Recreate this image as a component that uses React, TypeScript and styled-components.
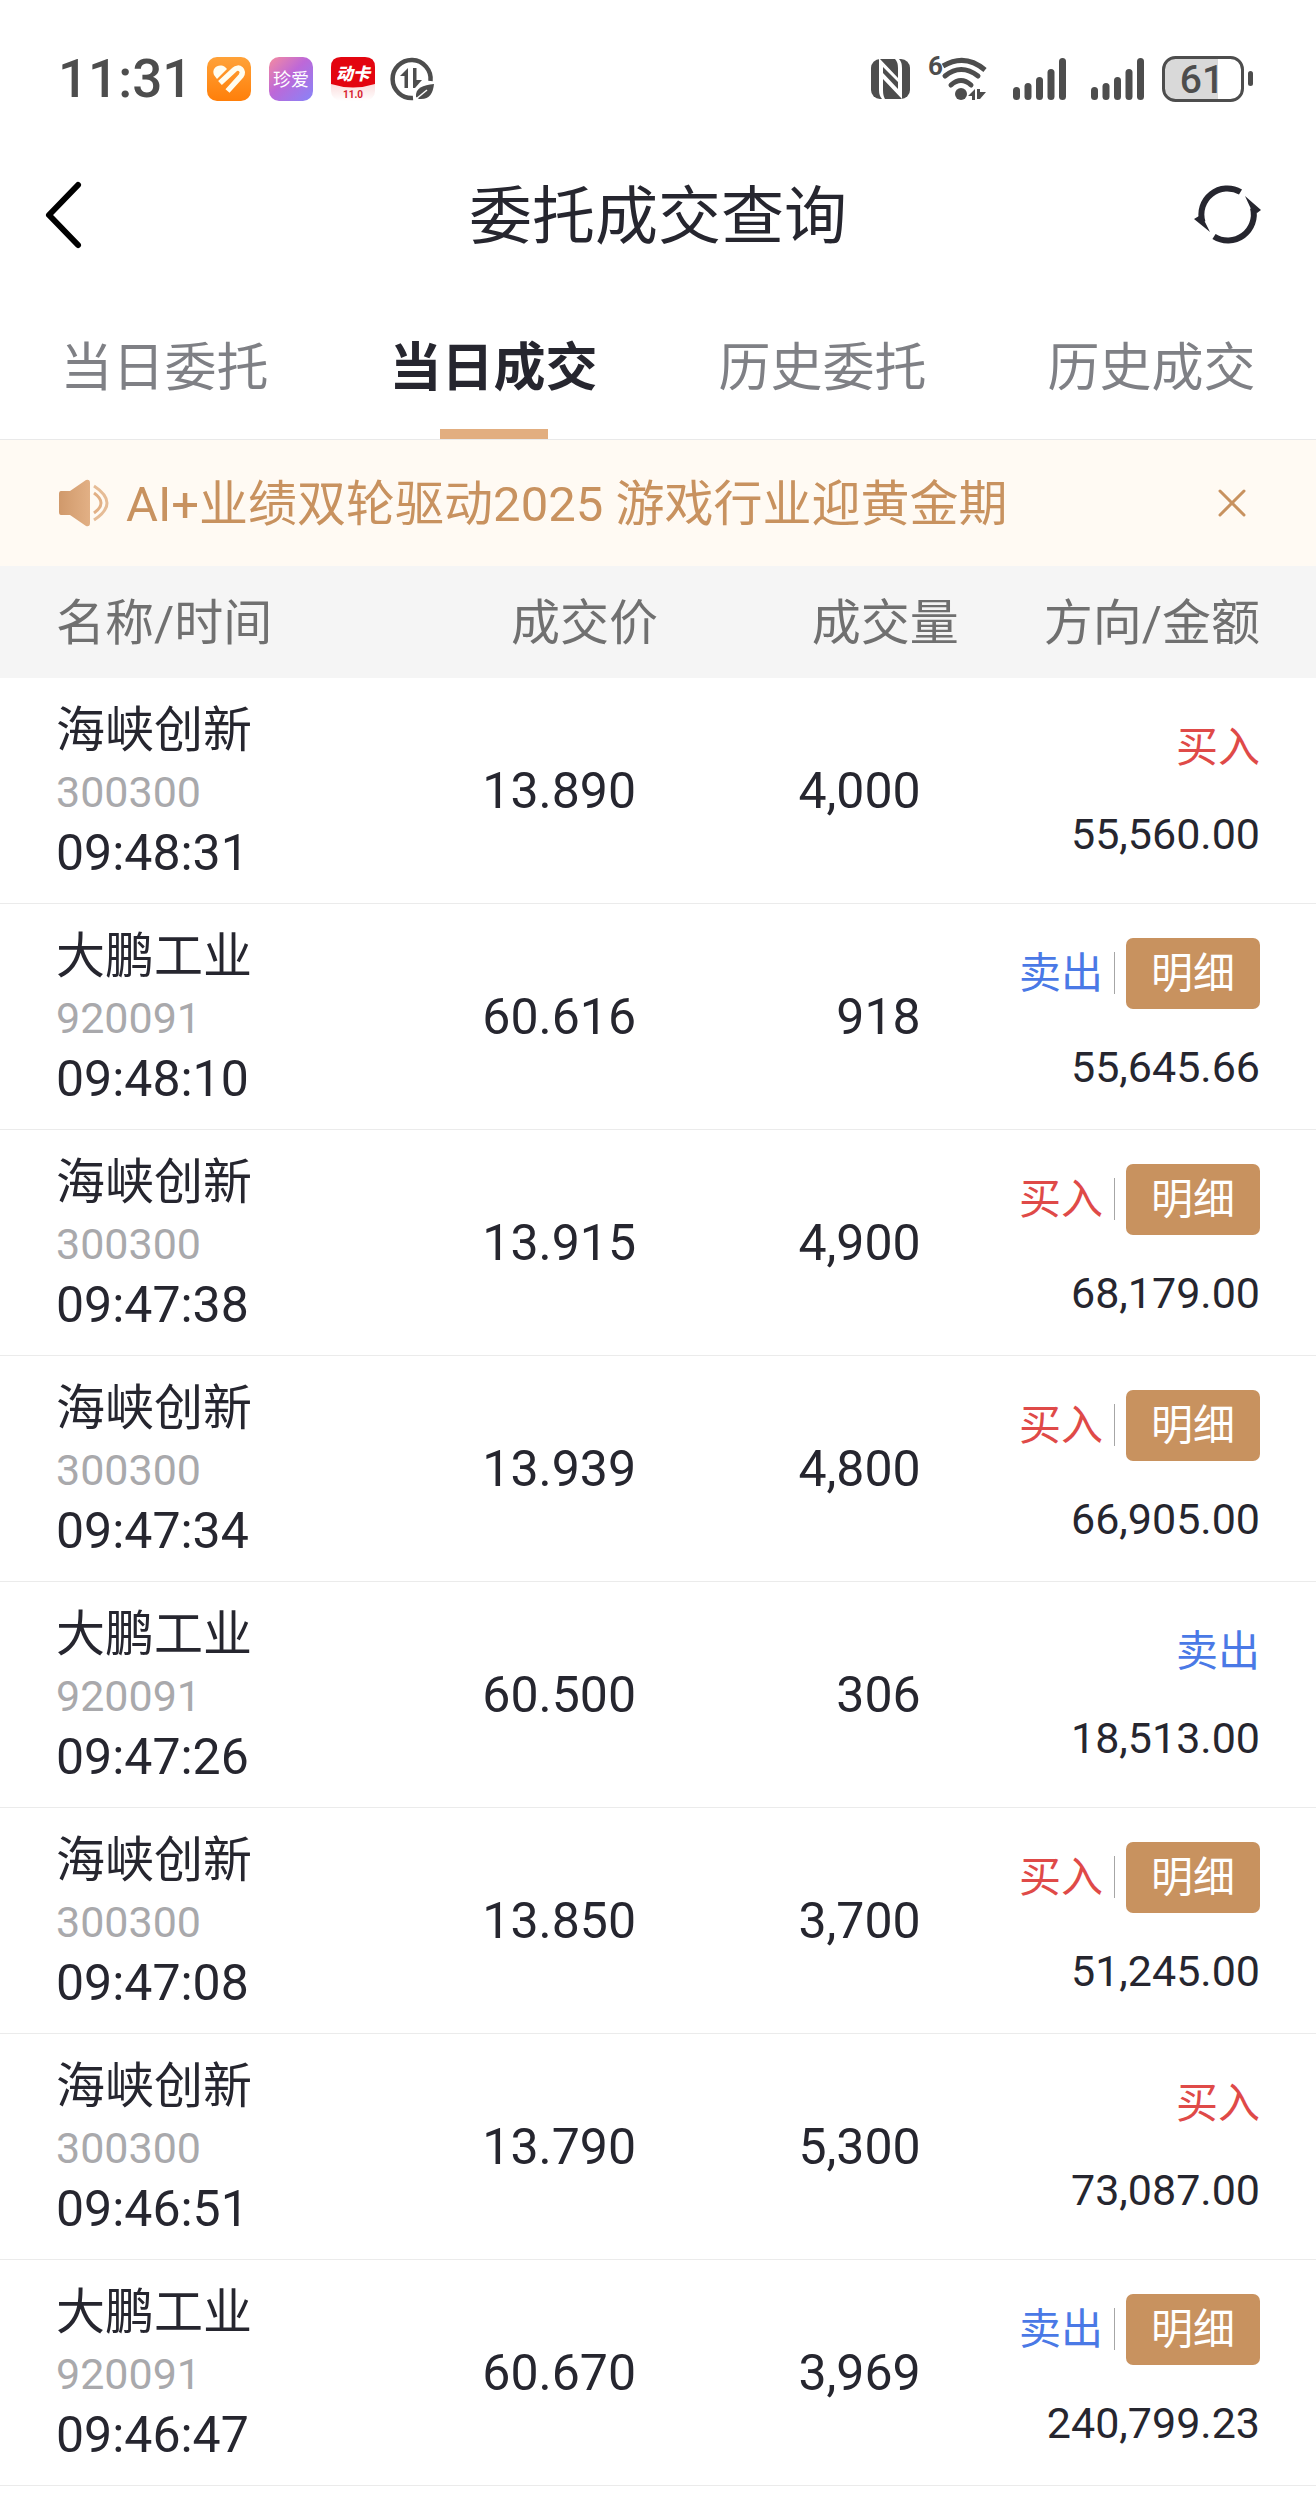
import { useState } from 'react';
import styled, { createGlobalStyle } from 'styled-components';

const ink = '#26262f';
const bronze = '#c8925f';

const GlobalStyle = createGlobalStyle`
  * { box-sizing: border-box; }
  body {
    margin: 0;
    background: #fff;
    color: ${ink};
    font-family: Roboto, "Noto Sans CJK SC", sans-serif;
  }
  button {
    margin: 0;
    padding: 0;
    border: 0;
    background: none;
    color: inherit;
    font: inherit;
    cursor: pointer;
  }
  svg { display: block; flex: none; }
`;

const StatusBar = styled.div`
  display: flex;
  align-items: center;
  justify-content: space-between;
  height: 158px;
  padding: 0 62px 0 58px;
  color: #4d4d4d;
`;

const StatusGroup = styled.div`
  display: flex;
  align-items: center;
  gap: 18px;
`;

const ClockGroup = styled(StatusGroup)`
  gap: 15px;
`;

const Clock = styled.time`
  font-size: 53px;
  line-height: 64px;
  font-weight: 500;
`;

const TitleBar = styled.header`
  display: grid;
  grid-template-columns: 1fr auto 1fr;
  align-items: center;
  height: 114px;
  padding: 0 44px;
`;

const Title = styled.h1`
  margin: 0;
  padding-top: 4px;
  font-size: 63px;
  line-height: 80px;
  font-weight: 400;
`;

const IconButton = styled.button<{ $end?: boolean }>`
  display: flex;
  justify-self: ${(p) => (p.$end ? 'end' : 'start')};
  padding-right: ${(p) => (p.$end ? 10 : 0)}px;
`;

const Tabs = styled.nav`
  display: flex;
  border-bottom: 1px solid #e9e9e9;
`;

const Tab = styled.button<{ $active: boolean }>`
  flex: 1;
  display: flex;
  flex-direction: column;
  align-items: center;
  gap: 29px;
  padding-top: 65px;
  font-size: 52px;
  line-height: 63px;
  font-weight: ${(p) => (p.$active ? 700 : 400)};
  color: ${(p) => (p.$active ? ink : '#7f8085')};

  &::after {
    content: '';
    width: 108px;
    height: 10px;
    background: ${(p) => (p.$active ? '#e2ae80' : 'transparent')};
  }
`;

const Notice = styled.div`
  display: flex;
  align-items: center;
  height: 126px;
  padding: 0 68px 0 58px;
  gap: 17px;
  background: #fffaf3;
  color: ${bronze};
`;

const NoticeLink = styled.a`
  flex: 1;
  padding-top: 4px;
  color: inherit;
  font-size: 49px;
  line-height: 62px;
  text-decoration: none;
  white-space: nowrap;
`;

const Table = styled.table`
  width: 100%;
  table-layout: fixed;
  border-collapse: separate;
  border-spacing: 0;
  font-size: 49px;
  line-height: 62px;
`;

const Col = styled.col<{ $w: number }>`
  width: ${(p) => p.$w}%;
`;

const Th = styled.th<{ $left?: boolean; $right?: number }>`
  height: 112px;
  padding: 4px ${(p) => p.$right ?? 0}px 0 ${(p) => (p.$left ? 56 : 0)}px;
  background: #f5f5f5;
  color: #707070;
  font-weight: 400;
  text-align: ${(p) => (p.$left ? 'left' : 'right')};
  white-space: nowrap;
`;

const Td = styled.td<{ $left?: number; $right?: number }>`
  height: 226px;
  padding: 0 ${(p) => p.$right ?? 0}px 0 ${(p) => p.$left ?? 0}px;
  border-bottom: 1px solid #ebebeb;
  text-align: ${(p) => (p.$left ? 'left' : 'right')};
  white-space: nowrap;
`;

const Figure = styled(Td)`
  font-size: 50px;
`;

const Name = styled.div`
  padding-top: 2px;
`;

const Code = styled.div`
  font-size: 43px;
  line-height: 60px;
  color: #a9a9ac;
`;

const Time = styled.time`
  display: block;
  font-size: 50px;
`;

const Deal = styled.div`
  display: flex;
  flex-direction: column;
  align-items: flex-end;
  gap: 29px;
  line-height: 58px;
`;

const DealTop = styled.div`
  display: flex;
  align-items: center;
`;

const Side = styled.span<{ $buy: boolean }>`
  padding-top: 2px;
  font-size: 42px;
  line-height: 56px;
  color: ${(p) => (p.$buy ? '#df4a48' : '#4a79e6')};
`;

const Detail = styled.button`
  width: 134px;
  height: 71px;
  margin-left: 11px;
  padding-top: 2px;
  border-radius: 7px;
  background: ${bronze};
  color: #fff;
  font-size: 42px;
`;

const Divider = styled.span`
  width: 1px;
  height: 42px;
  margin-left: 11px;
  background: #a6a6a6;
`;

const Amount = styled.div`
  font-size: 43px;
`;

const HeartAppIcon = () => (
  <svg width="44" height="44" viewBox="0 0 44 44" aria-hidden="true">
    <defs>
      <linearGradient id="heart" x1="0" y1="0" x2="0" y2="1">
        <stop offset="0" stopColor="#ffa238" />
        <stop offset="1" stopColor="#ff7f0a" />
      </linearGradient>
    </defs>
    <rect width="44" height="44" rx="10" fill="url(#heart)" />
    <path d="M7 18 C4 11 12 6 18 10 L20 12 L10 22 Z" fill="#fffdf0" />
    <path d="M13 26 L27 13 C32 8 38 14 34 19 L20.500 34" fill="none" stroke="#fffdf0" strokeWidth="5.500" />
  </svg>
);

const DatingAppIcon = () => (
  <svg width="44" height="44" viewBox="0 0 44 44" aria-hidden="true">
    <defs>
      <linearGradient id="dating" x1="0" y1="0" x2="1" y2="1">
        <stop offset="0" stopColor="#f58ba0" />
        <stop offset="0.45" stopColor="#bd68d8" />
        <stop offset="1" stopColor="#8784f8" />
      </linearGradient>
    </defs>
    <rect width="44" height="44" rx="10" fill="url(#dating)" />
    <text x="22" y="29" fontSize="18" textAnchor="middle" fill="#fff">珍爱</text>
  </svg>
);

const CardAppIcon = () => (
  <svg width="44" height="44" viewBox="0 0 44 44" aria-hidden="true">
    <defs>
      <linearGradient id="card" x1="0" y1="0" x2="0" y2="1">
        <stop offset="0.6" stopColor="#fbdcdc" />
        <stop offset="1" stopColor="#ffffff" />
      </linearGradient>
    </defs>
    <rect width="44" height="44" rx="10" fill="url(#card)" />
    <path d="M0 10 Q0 0 10 0 H34 Q44 0 44 10 V27 Q22 34 0 27 Z" fill="#e30510" />
    <text x="22" y="23" fontSize="17" fontWeight="900" fontStyle="italic" textAnchor="middle" fill="#fff">动卡</text>
    <text x="22" y="41" fontSize="10" fontWeight="700" textAnchor="middle" fill="#d62330">11.0</text>
  </svg>
);

const DataSaverIcon = () => (
  <svg width="44" height="44" viewBox="0 0 44 44" aria-hidden="true">
    <path d="M40.500 24 A19 19 0 1 0 23 41" fill="none" stroke="#4d4d4d" strokeWidth="4.500" />
    <path d="M10 19 L18 11 V31 H14.500 V19 Z M23 11 H26.500 V23 H32 L25 31 H23 Z" fill="#4d4d4d" />
    <path d="M26 40 C25 31 33 28 44 27 C43 37 39 43 29 42 Z" fill="#4d4d4d" />
    <path d="M26 42 L37 33" stroke="#fff" strokeWidth="1.500" />
  </svg>
);

const NfcIcon = () => (
  <svg width="39" height="40" viewBox="0 0 39 40" aria-hidden="true">
    <rect width="39" height="40" rx="9" fill="#4d4d4d" />
    <path d="M9 0 L27 19 V9 Q27 3 24 0 H28 Q31 3 31 9 V40 L12 20 V31 Q12 37 14 40 H11 Q8 37 8 31 V0 Z" fill="#fff" />
    <path d="M12 8 L27 23 V30 L12 14 Z" fill="#4d4d4d" />
  </svg>
);

const WifiIcon = () => (
  <svg width="60" height="62" viewBox="0 -8 60 62" aria-hidden="true">
    <text x="0" y="19" fontSize="26" fontWeight="700" fill="#4d4d4d">6</text>
    <g fill="none" stroke="#4d4d4d" strokeWidth="5">
      <path d="M15 10 Q37 -3 57 14" />
      <path d="M17 20 Q33 7 50 20" strokeLinecap="round" />
      <path d="M23 29 Q33 20 43 29" strokeLinecap="round" />
    </g>
    <circle cx="33" cy="38" r="6" fill="#4d4d4d" />
    <path d="M40 40 L47 33 V44 H44 V40 Z M49 33 H52 V36 H58 L52 43 H49 Z" fill="#4d4d4d" />
  </svg>
);

const SignalIcon = () => (
  <svg width="60" height="42" viewBox="-7 0 60 42" aria-hidden="true">
    {[13, 17, 23, 31, 42].map((h, i) => (
      <rect key={h} x={i * 11.5} y={42 - h} width="7" height={h} rx="3.5" fill="#4d4d4d" />
    ))}
  </svg>
);

const BatteryIcon = () => (
  <svg width="92" height="46" viewBox="0 0 92 46" role="img" aria-label="61%">
    <path d="M14 2 H56 V44 H14 Q2 44 2 32 V14 Q2 2 14 2 Z" fill="#d9d9d9" />
    <rect x="1.500" y="1.500" width="79" height="43" rx="12" fill="none" stroke="#4d4d4d" strokeWidth="3" />
    <rect x="86" y="15" width="5" height="15" rx="2.500" fill="#4d4d4d" />
    <text x="40" y="37" fontSize="39" fontWeight="500" textAnchor="middle" fill="#4d4d4d">61</text>
  </svg>
);

const BackIcon = () => (
  <svg width="40" height="70" viewBox="0 0 40 70" aria-hidden="true">
    <path d="M34 5 L5 35 L34 65" fill="none" stroke="#000" strokeWidth="6" strokeLinecap="round" strokeLinejoin="round" />
  </svg>
);

const RefreshIcon = () => (
  <svg width="68" height="60" viewBox="0 0 68 60" aria-hidden="true">
    <g fill="none" stroke={ink} strokeWidth="6">
      <path d="M46.500 7 A26 26 0 0 0 8.500 37" />
      <path d="M20 51.500 A26 26 0 0 0 59 23" />
    </g>
    <path d="M0 34 L5 31 L10 35 L16 47 Z M67 25 L63 28 L57 24 L51 11 Z" fill={ink} />
  </svg>
);

const SpeakerIcon = () => (
  <svg width="51" height="48" viewBox="0 0 51 48" aria-hidden="true">
    <defs>
      <linearGradient id="horn" x1="0" y1="0" x2="1" y2="0">
        <stop offset="0" stopColor="#d0996b" />
        <stop offset="1" stopColor="#e2b085" />
      </linearGradient>
    </defs>
    <path d="M3 12 H12 L28 1 Q32 0 32 4 V44 Q32 48 28 47 L12 36 H3 Q1 36 1 33 V15 Q1 12 3 12 Z" fill="url(#horn)" />
    <path d="M36 14 Q50 24 36 34" fill="none" stroke="#e2b085" strokeWidth="3" />
    <path d="M36 7 Q62 24 36 41" fill="none" stroke="#e6bc96" strokeWidth="3" />
  </svg>
);

const CloseIcon = () => (
  <svg width="32" height="32" viewBox="0 0 32 32" aria-hidden="true">
    <path d="M4 4 L28 28 M28 4 L4 28" fill="none" stroke={bronze} strokeWidth="3" strokeLinecap="round" />
  </svg>
);

interface Trade {
  name: string;
  code: string;
  time: string;
  price: string;
  volume: string;
  buy: boolean;
  detail: boolean;
  amount: string;
}

const hx = { name: '海峡创新', code: '300300' };
const dp = { name: '大鹏工业', code: '920091' };

const trades: Trade[] = [
  { ...hx, time: '09:48:31', price: '13.890', volume: '4,000', buy: true, detail: false, amount: '55,560.00' },
  { ...dp, time: '09:48:10', price: '60.616', volume: '918', buy: false, detail: true, amount: '55,645.66' },
  { ...hx, time: '09:47:38', price: '13.915', volume: '4,900', buy: true, detail: true, amount: '68,179.00' },
  { ...hx, time: '09:47:34', price: '13.939', volume: '4,800', buy: true, detail: true, amount: '66,905.00' },
  { ...dp, time: '09:47:26', price: '60.500', volume: '306', buy: false, detail: false, amount: '18,513.00' },
  { ...hx, time: '09:47:08', price: '13.850', volume: '3,700', buy: true, detail: true, amount: '51,245.00' },
  { ...hx, time: '09:46:51', price: '13.790', volume: '5,300', buy: true, detail: false, amount: '73,087.00' },
  { ...dp, time: '09:46:47', price: '60.670', volume: '3,969', buy: false, detail: true, amount: '240,799.23' },
];

const tabNames = ['当日委托', '当日成交', '历史委托', '历史成交'];

export default function App() {
  const [active, setActive] = useState(1);
  const [noticeOpen, setNoticeOpen] = useState(true);

  return (
    <>
      <GlobalStyle />
      <StatusBar>
        <ClockGroup>
          <Clock>11:31</Clock>
          <StatusGroup>
            <HeartAppIcon />
            <DatingAppIcon />
            <CardAppIcon />
          </StatusGroup>
          <DataSaverIcon />
        </ClockGroup>
        <StatusGroup>
          <NfcIcon />
          <WifiIcon />
          <SignalIcon />
          <SignalIcon />
          <BatteryIcon />
        </StatusGroup>
      </StatusBar>

      <TitleBar>
        <IconButton aria-label="返回"><BackIcon /></IconButton>
        <Title>委托成交查询</Title>
        <IconButton $end aria-label="刷新"><RefreshIcon /></IconButton>
      </TitleBar>

      <Tabs>
        {tabNames.map((name, i) => (
          <Tab key={name} $active={i === active} onClick={() => setActive(i)}>{name}</Tab>
        ))}
      </Tabs>

      {noticeOpen && (
        <Notice>
          <SpeakerIcon />
          <NoticeLink href="#notice">AI+业绩双轮驱动2025 游戏行业迎黄金期</NoticeLink>
          <IconButton aria-label="关闭" onClick={() => setNoticeOpen(false)}><CloseIcon /></IconButton>
        </Notice>
      )}

      <Table>
        <colgroup>
          <Col $w={28} />
          <Col $w={22} />
          <Col $w={23} />
          <Col $w={27} />
        </colgroup>
        <thead>
          <tr>
            <Th scope="col" $left>名称/时间</Th>
            <Th scope="col">成交价</Th>
            <Th scope="col" $right={2}>成交量</Th>
            <Th scope="col" $right={56}>方向/金额</Th>
          </tr>
        </thead>
        <tbody>
          {trades.map((t) => (
            <tr key={t.time}>
              <Td $left={56}>
                <Name>{t.name}</Name>
                <Code>{t.code}</Code>
                <Time>{t.time}</Time>
              </Td>
              <Figure $right={22}>{t.price}</Figure>
              <Figure $right={40}>{t.volume}</Figure>
              <Td $right={56}>
                <Deal>
                  <DealTop>
                    <Side $buy={t.buy}>{t.buy ? '买入' : '卖出'}</Side>
                    {t.detail && (
                      <>
                        <Divider />
                        <Detail>明细</Detail>
                      </>
                    )}
                  </DealTop>
                  <Amount>{t.amount}</Amount>
                </Deal>
              </Td>
            </tr>
          ))}
        </tbody>
      </Table>
    </>
  );
}
